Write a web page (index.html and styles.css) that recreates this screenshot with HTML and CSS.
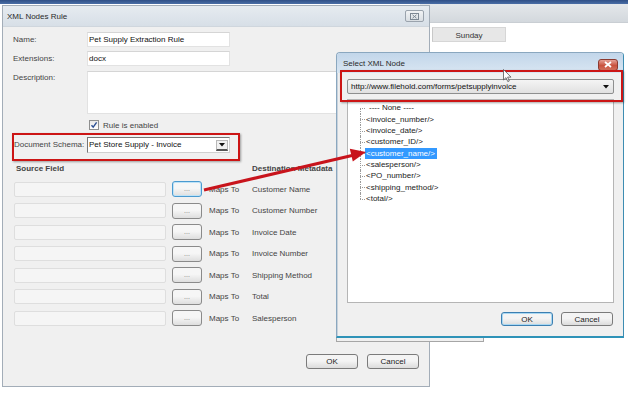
FILE: index.html
```html
<!DOCTYPE html>
<html>
<head>
<meta charset="utf-8">
<link rel="stylesheet" href="styles.css">
</head>
<body>
<div class="desktop">
  <div class="topbar"></div>

  <div class="bgwin">
    <div class="bgwin-title"></div>
    <div class="bgwin-grid">
      <div class="day">Sunday</div>
    </div>
  </div>

  <div class="win main">
    <div class="titlebar">
      <span class="title">XML Nodes Rule</span>
      <span class="closebtn"><svg width="9" height="7" viewBox="0 0 9 7"><rect x="0.5" y="0.5" width="8" height="6" fill="none" stroke="#7d8894"/><path d="M2.5 1.8 L6.5 5.2 M6.5 1.8 L2.5 5.2" stroke="#7d8894" stroke-width="1"/></svg></span>
    </div>
    <div class="body">
      <div class="frow r-name"><label>Name:</label><div class="input">Pet Supply Extraction Rule</div></div>
      <div class="frow r-ext"><label>Extensions:</label><div class="input">docx</div></div>
      <div class="frow r-desc"><label>Description:</label><div class="input textarea"></div></div>
      <div class="frow r-check"><label></label><span class="check"><svg width="8" height="8" viewBox="0 0 8 8"><path d="M1.5 4.2 L3.2 6.2 L6.6 1.4" fill="none" stroke="#2b4f93" stroke-width="1.4"/></svg></span><span class="checklabel">Rule is enabled</span></div>
      <div class="frow r-schema"><label>Document Schema:</label><div class="combo">Pet Store Supply - Invoice<span class="combo-btn"><svg width="6" height="4" viewBox="0 0 6 4"><path d="M0 0 H6 L3 3.5 Z" fill="#111"/></svg></span></div></div>

      <div class="maphead"><span class="h-src">Source Field</span><span class="h-dst">Destination Metadata</span></div>
      <div class="maps">
        <div class="maprow"><div class="src"></div><button class="dots focus">...</button><span class="mapsto">Maps To</span><span class="dst">Customer Name</span></div>
        <div class="maprow"><div class="src"></div><button class="dots">...</button><span class="mapsto">Maps To</span><span class="dst">Customer Number</span></div>
        <div class="maprow"><div class="src"></div><button class="dots">...</button><span class="mapsto">Maps To</span><span class="dst">Invoice Date</span></div>
        <div class="maprow"><div class="src"></div><button class="dots">...</button><span class="mapsto">Maps To</span><span class="dst">Invoice Number</span></div>
        <div class="maprow"><div class="src"></div><button class="dots">...</button><span class="mapsto">Maps To</span><span class="dst">Shipping Method</span></div>
        <div class="maprow"><div class="src"></div><button class="dots">...</button><span class="mapsto">Maps To</span><span class="dst">Total</span></div>
        <div class="maprow"><div class="src"></div><button class="dots">...</button><span class="mapsto">Maps To</span><span class="dst">Salesperson</span></div>
      </div>
      <div class="footer">
        <button class="btn">OK</button>
        <button class="btn">Cancel</button>
      </div>
    </div>
  </div>

  <div class="backstrip"></div>

  <div class="win select">
    <div class="sel-title">
      <span class="title">Select XML Node</span>
      <span class="redclose"><svg width="8" height="7" viewBox="0 0 8 7"><path d="M1 1 L7 6 M7 1 L1 6" stroke="#fff" stroke-width="1.8"/></svg></span>
    </div>
    <div class="sel-body">
      <div class="urlcombo">http://www.filehold.com/forms/petsupplyinvoice<span class="url-arrow"><svg width="6" height="4" viewBox="0 0 6 4"><path d="M0 0 H6 L3 3.5 Z" fill="#111"/></svg></span></div>
      <div class="listbox">
        <ul class="tree">
          <li class="none">---- None ----</li>
          <li>&lt;invoice_number/&gt;</li>
          <li>&lt;invoice_date/&gt;</li>
          <li>&lt;customer_ID/&gt;</li>
          <li><span class="sel">&lt;customer_name/&gt;</span></li>
          <li>&lt;salesperson/&gt;</li>
          <li>&lt;PO_number/&gt;</li>
          <li>&lt;shipping_method/&gt;</li>
          <li>&lt;total/&gt;</li>
        </ul>
      </div>
      <div class="sel-footer">
        <button class="btn default">OK</button>
        <button class="btn">Cancel</button>
      </div>
    </div>
  </div>

  <div class="redbox rb-schema"></div>
  <div class="redbox rb-url"></div>

  <svg class="arrow" width="628" height="397" viewBox="0 0 628 397">
    <line x1="204" y1="190" x2="352" y2="155.5" stroke="#c8141c" stroke-width="3"/>
    <polygon points="366,152 352.8,161.5 349.8,148.8" fill="#c8141c"/>
  </svg>

  <svg class="cursor" width="10" height="14" viewBox="0 0 10 14">
    <path d="M0.5 0.5 L0.5 11 L3 8.6 L4.8 12.6 L6.3 12 L4.6 8.1 L8 8.1 Z" fill="#fff" stroke="#555" stroke-width="0.8"/>
  </svg>
</div>
</body>
</html>
```

FILE: styles.css
```css
* { box-sizing: border-box; }
html, body { margin: 0; padding: 0; }
body {
  background: #ffffff;
  font-family: "Liberation Sans", Arial, sans-serif;
  font-size: 8px;
  color: #333;
}
.desktop {
  position: relative;
  width: 628px;
  height: 397px;
  overflow: hidden;
  background: #fff;
}
.topbar {
  height: 4px;
  background: linear-gradient(#2f4f86, #4a6ea6);
}

/* background calendar window */
.bgwin {
  position: absolute;
  left: 420px;
  top: 4px;
  width: 208px;
  height: 60px;
}
.bgwin-title {
  height: 19px;
  background: linear-gradient(#e4e7ea, #d3d8dd);
  border-bottom: 1px solid #c9ced3;
}
.bgwin-grid {
  display: flex;
  padding: 4px 0 0 12px;
  background: #fff;
}
.day {
  width: 74px;
  height: 15px;
  line-height: 15px;
  text-align: center;
  background: #e7e7e7;
  border: 1px solid #d6d6d6;
  border-left: 1px solid #c8c8c8;
  color: #333;
}

/* windows */
.win {
  position: absolute;
  display: flex;
  flex-direction: column;
}
.main {
  left: 2px;
  top: 5px;
  width: 428px;
  height: 382px;
  border: 1px solid #a3adb8;
  background: #f0f0f0;
}
.titlebar {
  height: 21px;
  display: flex;
  align-items: center;
  justify-content: space-between;
  padding: 0 5px 0 4px;
  background: linear-gradient(#e6ebf0, #d7dfe7);
  border-bottom: 1px solid #cfd6dd;
}
.title { color: #2a2a2a; }
.closebtn {
  width: 19px;
  height: 12px;
  border: 1px solid #9aa3ad;
  border-radius: 2px;
  background: linear-gradient(#f1f3f5, #d9dee3);
  display: flex;
  align-items: center;
  justify-content: center;
}
.body {
  flex: 1;
  display: flex;
  flex-direction: column;
  padding: 5px 0 0 10px;
}
.frow {
  display: flex;
  align-items: flex-start;
}
.frow label {
  width: 74px;
  flex: none;
  color: #444;
}
.input {
  background: #fff;
  border: 1px solid #e2e2e2;
  border-top-color: #d5d5d5;
  width: 143px;
  height: 15px;
  line-height: 13px;
  padding-left: 1px;
  color: #111;
}
.r-name label, .r-ext label, .r-schema label { line-height: 15px; }
.r-ext { margin-top: 4px; }
.r-desc { margin-top: 5px; }
.r-desc label { padding-top: 2px; }
.textarea { width: 340px; height: 43px; }
.r-check { margin-top: 6px; align-items: center; height: 10px; }
.check {
  width: 10px;
  height: 10px;
  margin-left: 2px;
  border: 1px solid #8e8f8f;
  background: linear-gradient(#e9e9e9, #ffffff);
  display: flex;
  align-items: center;
  justify-content: center;
}
.checklabel { margin-left: 4px; color: #444; }
.r-schema { margin-top: 7px; }
.r-schema label { padding-left: 1px; }
.combo {
  position: relative;
  width: 143px;
  height: 16px;
  line-height: 14px;
  padding-left: 1px;
  background: #fff;
  border: 1px solid #767676;
  border-right-color: #d0d0d0;
  border-bottom-color: #d0d0d0;
  color: #111;
}
.combo-btn {
  position: absolute;
  right: 1px;
  top: 2px;
  width: 12px;
  height: 11px;
  background: #f0f0f0;
  border: 1px solid #b8b8b8;
  border-bottom: 2px solid #555;
  display: flex;
  align-items: center;
  justify-content: center;
}
.maphead {
  display: flex;
  margin-top: 10px;
  height: 12px;
  line-height: 12px;
  font-weight: bold;
  color: #444;
}
.h-src { width: 239px; padding-left: 3px; }
.maps {
  display: flex;
  flex-direction: column;
  gap: 5.5px;
  margin-top: 6px;
}
.maprow {
  display: flex;
  align-items: center;
  height: 16px;
}
.src {
  width: 152px;
  height: 15px;
  margin-left: 1px;
  background: #f5f5f5;
  border: 1px solid #dedede;
  border-radius: 2px;
}
.dots {
  margin-left: 6px;
  width: 30px;
  height: 16px;
  padding: 0;
  border: 1px solid #8a8a8a;
  border-radius: 3px;
  background: linear-gradient(#f6f6f6 45%, #dedede);
  font-family: "Liberation Sans", Arial, sans-serif;
  font-size: 7px;
  color: #777;
  line-height: 12px;
}
.dots.focus { border-color: #4a9ad0; box-shadow: inset 0 0 0 1px #bfe3f7; }
.mapsto { margin-left: 7px; width: 43px; color: #444; }
.dst { color: #444; }
.footer {
  margin-top: auto;
  display: flex;
  justify-content: flex-end;
  gap: 9px;
  padding: 0 10px 17px 0;
}
.btn {
  width: 52px;
  height: 15px;
  padding: 0;
  border: 1px solid #7b7b7b;
  border-radius: 3px;
  background: linear-gradient(#f4f4f4 45%, #dcdcdc);
  font-family: "Liberation Sans", Arial, sans-serif;
  font-size: 8px;
  color: #222;
  line-height: 12px;
}

.backstrip {
  position: absolute;
  left: 336px;
  top: 330px;
  width: 148px;
  height: 12px;
  background: #f0f0f0;
  border: 1px solid #a6a6a6;
}

/* select xml node dialog */
.select {
  left: 336px;
  top: 52px;
  width: 288px;
  height: 286px;
  border: 1px solid #8aa7bf;
  border-bottom: 2px solid #2f93b8;
  border-right-color: #3d8db2;
  border-radius: 4px 4px 0 0;
  background: #f0f0f0;
}
.sel-title {
  height: 20px;
  display: flex;
  align-items: center;
  justify-content: space-between;
  padding: 0 5px 0 6px;
  background: linear-gradient(#c2d6ea, #d9e6f2);
  border-radius: 3px 3px 0 0;
}
.redclose {
  width: 20px;
  height: 12px;
  margin-top: 3px;
  border: 1px solid #8b3a30;
  border-radius: 3px;
  background: linear-gradient(#e6a196, #c9523e 55%, #d2705c);
  display: flex;
  align-items: center;
  justify-content: center;
}
.sel-body {
  flex: 1;
  display: flex;
  flex-direction: column;
  padding: 6px 9px 0 9px;
  border-left: 1px solid #c8d2dc;
}
.urlcombo {
  position: relative;
  height: 15px;
  line-height: 13px;
  padding-left: 3px;
  border: 1px solid #8e8f8f;
  border-radius: 2px;
  background: linear-gradient(#f4f4f4, #e1e1e1);
  color: #111;
}
.url-arrow {
  position: absolute;
  right: 4px;
  top: 5px;
  line-height: 0;
}
.listbox {
  margin-top: 5px;
  height: 204px;
  background: #fff;
  border: 1px solid #b5b5b5;
  padding: 2.3px 0 0 12px;
}
.tree {
  list-style: none;
  margin: 0;
  padding: 0;
}
.tree li {
  position: relative;
  height: 11.35px;
  line-height: 11.35px;
  padding-left: 6px;
  color: #222;
}
.tree li::before {
  content: "";
  position: absolute;
  left: 0;
  top: 5.6px;
  width: 5px;
  border-top: 1px dotted #9a9a9a;
}
.tree li::after {
  content: "";
  position: absolute;
  left: 0;
  top: 0;
  height: 100%;
  border-left: 1px dotted #9a9a9a;
}
.tree li:first-child::after { top: 5.6px; height: 6px; }
.tree li:last-child::after { height: 6px; }
.tree li.none { padding-left: 9px; }
.sel {
  background: #3399ff;
  color: #fff;
  padding: 0 2px 0 1px;
  margin-left: -1px;
  display: inline-block;
  height: 11px;
  line-height: 11px;
}
.sel-footer {
  display: flex;
  justify-content: flex-end;
  gap: 8px;
  margin-top: 9px;
  padding-right: 1px;
}
.sel-footer .btn { height: 14px; width: 52px; line-height: 11px; }
.btn.default { border-color: #3c7fb1; box-shadow: inset 0 0 0 1px #a9d8f3; }

/* annotations */
.redbox {
  position: absolute;
  border: 2px solid #cc1515;
  box-shadow: 1px 1px 2px rgba(0,0,0,0.35);
}
.rb-schema { left: 12px; top: 133px; width: 228px; height: 28px; }
.rb-url { left: 340px; top: 70px; width: 283px; height: 32px; }
.arrow { position: absolute; left: 0; top: 0; pointer-events: none; }
.cursor { position: absolute; left: 503px; top: 69px; }
```
